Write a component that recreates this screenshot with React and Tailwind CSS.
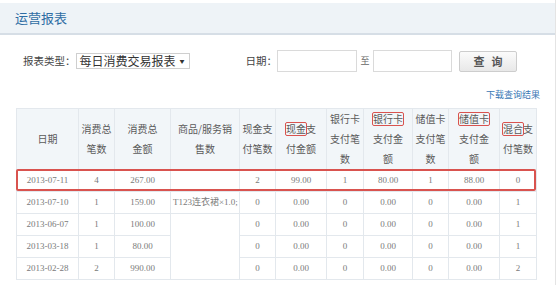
import React from "react";

const cjk = { fontFamily: '"Noto Sans CJK SC", "Noto Sans", sans-serif' };
const serif = { fontFamily: '"Liberation Serif", "Noto Sans CJK SC", serif' };

const cols = [62, 36, 56, 69, 36, 51, 37, 49, 36, 51, 37];

function Box({ children }) {
  return (
    <span className="inline-block leading-[12px] outline outline-1 outline-[#d9534f] rounded-[1px]">
      {children}
    </span>
  );
}

const rows = [
  ["2013-07-11", "4", "267.00", "2", "99.00", "1", "80.00", "1", "88.00", "0"],
  ["2013-07-10", "1", "159.00", "0", "0.00", "0", "0.00", "0", "0.00", "1"],
  ["2013-06-07", "1", "100.00", "0", "0.00", "0", "0.00", "0", "0.00", "1"],
  ["2013-03-18", "1", "80.00", "0", "0.00", "0", "0.00", "0", "0.00", "1"],
  ["2013-02-28", "2", "990.00", "0", "0.00", "0", "0.00", "0", "0.00", "2"],
];

export default function App() {
  const th =
    "h-[61px] p-0 border border-[#e3e8ed] bg-[#f2f6f9] text-[10px] leading-[20px] font-normal text-[#5a5a5a] text-center align-middle";
  const td =
    "h-[22px] p-0 border border-[#e3e8ed] text-[9px] text-[#7a7a7a] text-center align-middle whitespace-nowrap";
  return (
    <div className="w-[556px] h-[285px] overflow-hidden bg-white border-r border-[#e4e4e4]" style={cjk}>
      <div className="pt-[3px]">
        <div className="h-[32px] bg-[#eef3f7] border-b-2 border-[#d6dee6] flex items-center pl-[15px]">
          <span className="text-[13px] text-[#2e6da4]">运营报表</span>
        </div>
      </div>

      <div className="mt-[15px] h-[22px] flex items-center pl-[23px] text-[10.5px] text-[#444]">
        <span>报表类型：</span>
        <div className="w-[114px] h-[16px] border border-[#cfcfcf] flex items-center pl-[3px] text-[12px] text-[#333]">
          <span>每日消费交易报表</span>
          <span className="ml-auto mr-[4px] text-[5px] text-[#333]">▼</span>
        </div>
        <span className="ml-[56px]">日期：</span>
        <div className="w-[80px] h-[22px] border border-[#dadada] bg-white" />
        <span className="w-[16px] text-center text-[9px] text-[#666]">至</span>
        <div className="w-[79px] h-[22px] border border-[#dadada] bg-white" />
        <button className="ml-[7px] w-[58px] h-[21px] border border-[#cdcdcd] rounded-[2px] bg-gradient-to-b from-[#fbfbfb] to-[#e8e8e8] text-[11px] font-bold text-[#555] flex items-center justify-center gap-[7px]">
          <span>查</span>
          <span>询</span>
        </button>
      </div>

      <div className="mt-[18px] h-[10px] leading-[10px] text-right pr-[15px] text-[9px] text-[#3b78b5]">
        下载查询结果
      </div>

      <div className="mt-[8px] ml-[16px] w-[520px] relative">
        <table className="border-collapse table-fixed w-[520px]">
          <colgroup>
            {cols.map((w, i) => (
              <col key={i} style={{ width: w }} />
            ))}
          </colgroup>
          <thead>
            <tr>
              <th className={th}>日期</th>
              <th className={th}>消费总<br />笔数</th>
              <th className={th}>消费总<br />金额</th>
              <th className={th}>商品/服务销<br />售数</th>
              <th className={th}>现金支<br />付笔数</th>
              <th className={th}><Box>现金</Box>支<br />付金额</th>
              <th className={th}>银行卡<br />支付笔<br />数</th>
              <th className={th}><Box>银行卡</Box><br />支付金<br />额</th>
              <th className={th}>储值卡<br />支付笔<br />数</th>
              <th className={th}><Box>储值卡</Box><br />支付金<br />额</th>
              <th className={th}><Box>混合</Box>支<br />付笔数</th>
            </tr>
          </thead>
          <tbody style={serif}>
            {rows.map((r, i) => (
              <tr key={i}>
                <td className={td}>{r[0]}</td>
                <td className={td}>{r[1]}</td>
                <td className={td}>{r[2]}</td>
                {i === 0 && <td className={td}></td>}
                {i === 1 && <td className={td + " text-left pl-[2px]"}>T123连衣裙×1.0;</td>}
                {i === 2 && <td className={td} rowSpan={3}></td>}
                {r.slice(3).map((c, j) => (
                  <td key={j} className={td}>{c}</td>
                ))}
              </tr>
            ))}
          </tbody>
        </table>
        <div className="absolute left-0 top-[61px] w-[520px] h-[22px] border-2 border-[#d9534f] rounded-[2px] pointer-events-none" />
      </div>
    </div>
  );
}
